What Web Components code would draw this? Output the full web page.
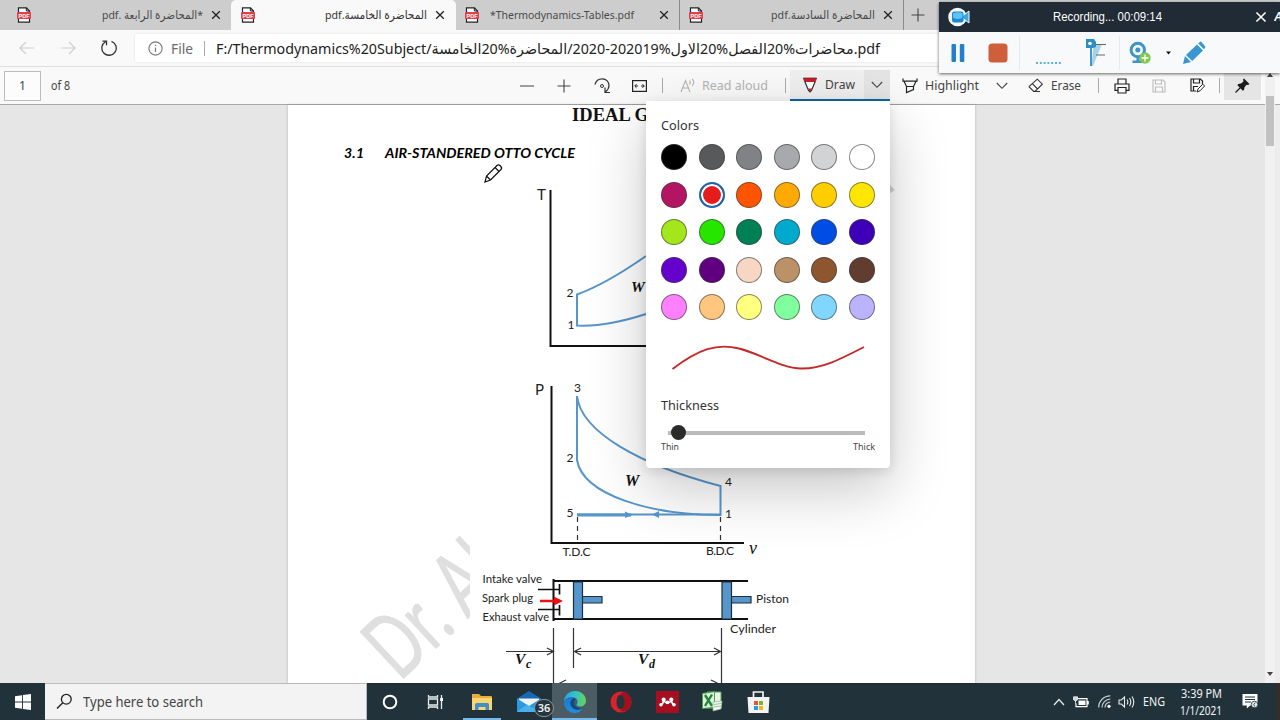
<!DOCTYPE html>
<html lang="en">
<head>
<meta charset="utf-8">
<title>PDF viewer</title>
<style>
	html, body {
		margin: 0;
		height: 100%;
		overflow: hidden;
	}

	body {
		font-family: "Noto Sans", "Open Sans", "DejaVu Sans", sans-serif;
		color: #333;
	}
</style>
</head>
<body>
<app-screen></app-screen>

<script>
const icons = {
	pdf: `<svg width="14" height="16" viewBox="0 0 14 16"><path d="M1.500 .8h8l3 3.200V15.200h-11z" fill="#fff" stroke="#222" stroke-width="1.200"/><path d="M9.300 1v3h3" fill="none" stroke="#222"/><rect x="0" y="5" width="14" height="7" rx="1" fill="#dc4048"/><text x="1.500" y="10.500" font-family="Liberation Sans, sans-serif" font-size="5.500" font-weight="bold" fill="#fff" textLength="11">PDF</text></svg>`,
	close: `<svg width="10" height="10" viewBox="0 0 10 10"><path d="M1.200 1.200l7.600 7.600M8.800 1.200L1.200 8.800" stroke="currentColor" stroke-width="1.300"/></svg>`,
	plus: `<svg width="14" height="14" viewBox="0 0 14 14"><path d="M7 .5v13M.5 7h13" stroke="#444" stroke-width="1.100"/></svg>`,
	minus: `<svg width="14" height="14" viewBox="0 0 14 14"><path d="M0 7h14" stroke="#555" stroke-width="1.100"/></svg>`,
	back: `<svg width="16" height="14" viewBox="0 0 16 14"><path d="M15 7H1M7 1L1 7l6 6" fill="none" stroke="#cfcfcf" stroke-width="1.200"/></svg>`,
	forward: `<svg width="16" height="14" viewBox="0 0 16 14"><path d="M1 7h14M9 1l6 6-6 6" fill="none" stroke="#cfcfcf" stroke-width="1.200"/></svg>`,
	reload: `<svg width="16" height="16" viewBox="0 0 16 16"><path d="M10.500 1.300A7.200 7.200 0 1 1 4.500 1.800M1.500 1.200h4v4" fill="none" stroke="#333" stroke-width="1.300"/></svg>`,
	info: `<svg width="15" height="15" viewBox="0 0 15 15"><circle cx="7.500" cy="7.500" r="6.600" fill="none" stroke="#777" stroke-width="1.100"/><path d="M7.500 6.500v4.500M7.500 3.800v1.300" stroke="#777" stroke-width="1.200"/></svg>`,
	rotate: `<svg width="17" height="16" viewBox="0 0 17 16"><path d="M1 6.500C2 2.500 5 .8 8.300 .8 12.500 .8 15 4 15 7.500 15 10 13.800 12 11.500 14M11 9.500v5h5" fill="none" stroke="#333" stroke-width="1.200"/><circle cx="8" cy="8" r="1.500" fill="none" stroke="#333"/></svg>`,
	fit: `<svg width="15" height="12" viewBox="0 0 15 12"><rect x=".6" y=".6" width="13.800" height="10.800" fill="none" stroke="#222" stroke-width="1.200"/><path d="M3 6h3M12 6H9M4.500 4.200L2.700 6l1.800 1.800M10.500 4.200L12.300 6l-1.800 1.800" fill="none" stroke="#222"/></svg>`,
	aloud: `<svg width="16" height="15" viewBox="0 0 16 15"><path d="M1 14L5.500 2.500 10 14M2.600 10h5.800M9.500 2.500q1.600 1.800 0 4M12.300 1q2.800 3 0 7" fill="none" stroke="#b4b4b4" stroke-width="1.100"/></svg>`,
	draw: `<svg width="14" height="16" viewBox="0 0 14 16"><path d="M.3 1h13.400L12 5.500H2z" fill="#c4202c" stroke="#751a20" stroke-width=".7"/><path d="M2 5l3.500 8.500L7 15l1.500-1.500L12 5" fill="#fff" stroke="#333" stroke-width="1.200"/><path d="M5 11.500L7 15l2-3.500z" fill="#c4202c"/></svg>`,
	chevron: `<svg width="12" height="8" viewBox="0 0 12 8"><path d="M.8 1L6 6.300 11.200 1" fill="none" stroke="#444" stroke-width="1.100"/></svg>`,
	highlight: `<svg width="16" height="16" viewBox="0 0 16 16"><path d="M1 .5v2.700h14V.5M2 3.300L4.500 8.500h7L14 3.300M4.500 8.500V14.500l7-3V8.500" fill="none" stroke="#222" stroke-width="1.200"/></svg>`,
	erase: `<svg width="16" height="15" viewBox="0 0 16 15"><path d="M1.200 8.300L9.300 1.200l5 5-7 7H5.500L1.200 9zM4.300 5.700l5.300 5.300M5 13.500h7" fill="none" stroke="#333" stroke-width="1.100"/></svg>`,
	print: `<svg width="16" height="16" viewBox="0 0 16 16"><path d="M4 6V1h8v5M4 12.300H1V6h14v6.300h-3M4 9.500h8V15H4z" fill="none" stroke="#222" stroke-width="1.200"/></svg>`,
	save: `<svg width="14" height="14" viewBox="0 0 14 14"><path d="M1 1h10l2 2v10H1zM3.500 1v4h6V1M3.500 13V8h7v5" fill="none" stroke="#bbb" stroke-width="1.100"/></svg>`,
	saveAs: `<svg width="15" height="15" viewBox="0 0 15 15"><path d="M6 13H1V1h9.500l2 2v3M3.500 1v4h6V1M3.500 13V8.500H8" fill="none" stroke="#222" stroke-width="1.200"/><path d="M7 14l1-3 4.800-4.800 1.800 1.800L10 12.800z" fill="#fff" stroke="#222"/></svg>`,
	pin: `<svg width="15" height="15" viewBox="0 0 15 15"><path d="M9 .5L14.500 6 13 7 11.500 6.800 9.500 9.300 9 12 7.800 12.800 2.400 7.200 3.200 6 6 5.600 8.500 3.500 8 1.500z" fill="#1c1c1c"/><path d="M5.500 9.500L.5 14.500" stroke="#1c1c1c" stroke-width="1.200"/></svg>`,
	start: `<svg width="16" height="16" viewBox="0 0 16 16"><path d="M0 2.300l7-1v6.300H0zM7.900 1.100L16 0v7.600H7.900zM0 8.400h7v6.300l-7-1zM7.900 8.400H16V16l-8.100-1.100z" fill="#fff"/></svg>`,
	search: `<svg width="17" height="17" viewBox="0 0 17 17"><circle cx="10.300" cy="6.200" r="4.900" fill="none" stroke="#222" stroke-width="1.300"/><path d="M6.800 9.700L1 15.500" stroke="#222" stroke-width="1.400"/></svg>`,
	cortana: `<svg width="16" height="16" viewBox="0 0 16 16"><circle cx="8" cy="8" r="6.300" fill="none" stroke="#fff" stroke-width="2"/></svg>`,
	taskView: `<svg width="17" height="16" viewBox="0 0 17 16"><path d="M1.500 1v2h9V1M1.500 15v-2h9v2M1.500 5h9v6h-9zM14.500 1v14" fill="none" stroke="#e8eef0" stroke-width="1.300"/><path d="M13.200 4h2.800v3h-2.800z" fill="#fff"/></svg>`,
	explorer: `<svg width="22" height="18" viewBox="0 0 22 18"><path d="M1 1h7l2 2h10a1 1 0 0 1 1 1v12H1z" fill="#e9ad3a"/><path d="M1 5h20v12H1z" fill="#fbd66f"/><path d="M4 17v-5.500q0-1.500 1.500-1.500h11q1.500 0 1.500 1.500V17h-3.500v-3h-7v3z" fill="#3f8fc8"/></svg>`,
	edge: `<svg width="24" height="24" viewBox="0 0 24 24"><defs><linearGradient id="e1" x1="0" x2="1"><stop offset="0" stop-color="#2ba5e6"/><stop offset=".55" stop-color="#35c3c9"/><stop offset="1" stop-color="#6bd54c"/></linearGradient><linearGradient id="e2" x1="0" y1="0" x2="0" y2="1"><stop offset="0" stop-color="#1b77c8"/><stop offset="1" stop-color="#1f8fe0"/></linearGradient></defs><path d="M1 12C1 5.500 6 1 12.200 1 18.500 1 23 5.500 23 10.500c0 4-2.800 6-5.800 6-2.300 0-3.700-.8-3.700-1.800 0-.7 1.100-1 1.100-2.900 0-2.400-2.100-4.300-5.200-4.300C5 7.500 1.500 10 1 12z" fill="url(#e1)"/><path d="M1 12c.5-3 3.500-4.700 7-4.700 1.400 0 2.600.3 3.600.8C7.800 9 6.700 12.500 8 15.700c1.500 3.600 6.800 5.500 12 2.400C17.700 22 14.500 23 12 23 5.500 23 1 18 1 12z" fill="url(#e2)"/><path d="M11.600 8.100C7.800 9 6.700 12.500 8 15.700c1.500 3.600 6.800 5.500 12 2.400-3 .7-8-.5-8.800-4.600-.4-2 .5-3 1.500-4.500z" fill="#114a8b"/></svg>`,
	opera: `<svg width="22" height="22" viewBox="0 0 22 22"><circle cx="11" cy="11" r="10.500" fill="#d9222b"/><path d="M17 2.500a10.500 10.500 0 0 1 0 17q-4 2-7 0 4-1 4-8.500T10 2.500q3.500-2 7 0z" fill="#a30f1a"/><ellipse cx="10.500" cy="11" rx="4" ry="7.300" fill="#25343b"/></svg>`,
	mendeley: `<svg width="23" height="22" viewBox="0 0 23 22"><path d="M0 0h23v22H0z" fill="#a70f21"/><path d="M5 13.500q2-.5 2.700-4 1.300 2.500 3.800 2.500t3.800-2.500q.7 3.500 2.700 4" fill="none" stroke="#fff" stroke-width="1.600"/><circle cx="7.700" cy="8.700" r="2.100" fill="#fff"/><circle cx="15.300" cy="8.700" r="2.100" fill="#fff"/><circle cx="11.500" cy="11.300" r="1.900" fill="#fff"/><circle cx="5" cy="13.700" r="1.800" fill="#fff"/><circle cx="18" cy="13.700" r="1.800" fill="#fff"/></svg>`,
	excel: `<svg width="21" height="21" viewBox="0 0 21 21"><path d="M5 1h14v16H5z" fill="#e8f4e5" stroke="#5aa25a"/><path d="M0 2l13-2v17L0 18z" fill="#4da34f"/><path d="M1 3l11-1.800v14.600L1 17z" fill="#dff1da"/><path d="M3 4l7 11M10 3.500L3 15" stroke="#24863a" stroke-width="2.400"/><path d="M11 11l9-1-1 8-8 2z" fill="#f3f8f1" stroke="#85b885" stroke-width=".7"/><path d="M12 13.500l7-1M12 16l7-1" stroke="#85b885" stroke-width=".8"/></svg>`,
	store: `<svg width="23" height="24" viewBox="0 0 23 24"><path d="M6.500 8V2h9.500v6" fill="none" stroke="#f4f4f4" stroke-width="1.700"/><path d="M.5 7h22l-1 16h-20z" fill="#f4f4f4"/><path d="M7 11h4v4H7z" fill="#e6532c"/><path d="M12 11h4v4h-4z" fill="#7db82c"/><path d="M7 16h4v4H7z" fill="#22a0dd"/><path d="M12 16h4v4h-4z" fill="#f8b31b"/></svg>`,
	mail: `<svg width="24" height="22" viewBox="0 0 24 22"><path d="M0 7.500L12 0l12 7.500V21H0z" fill="#1669b4"/><path d="M2 7.500h20v8H2z" fill="#eef3f7"/><path d="M0 7.500L12 15l12-7.500V21H0z" fill="#2a9ae0"/><path d="M0 21l10-7.500 2 1.500 12 6z" fill="#49b1f0"/></svg>`,
	up: `<svg width="12" height="8" viewBox="0 0 12 8"><path d="M1 7l5-5.500L11 7" fill="none" stroke="#e8eef0" stroke-width="1.200"/></svg>`,
	battery: `<svg width="16" height="12" viewBox="0 0 16 12"><path d="M4.500 2.700h9.500v8H3V7.500M15.200 5v3.500" fill="none" stroke="#fff" stroke-width="1.200"/><path d="M5.500 4.500h7v4.500H5.500z" fill="#fff"/><path d="M.5.800h4v3l-2 1.500-2-1.500zM2.500 5v3" fill="#cdd6d9" stroke="#fff" stroke-width=".7"/></svg>`,
	wifi: `<svg width="13" height="13" viewBox="0 0 13 13"><g fill="none" stroke="#c7d0d4" stroke-width="1.200"><path d="M.7 12.500A11.500 11.500 0 0 1 12.300.8M4 12.500A8.500 8.500 0 0 1 12.300 4M7 12.500A5.500 5.500 0 0 1 12.300 7"/></g><circle cx="11" cy="11.300" r="1.600" fill="#fff"/></svg>`,
	sound: `<svg width="17" height="14" viewBox="0 0 17 14"><path d="M1 5h2.300L6.500 2v10L3.300 9H1zM9 4.500q1.700 2.500 0 5M11.500 3q2.700 4 0 8M14 1.500q3.600 5.500 0 11" fill="none" stroke="#e8eef0" stroke-width="1.100"/></svg>`,
	notes: `<svg width="17" height="17" viewBox="0 0 17 17"><path d="M.5 1h15v11.500H8L4.800 15.500v-3H.5z" fill="#fff"/><path d="M3 4h10M3 6.500h10M3 9h6" stroke="#22323a"/><circle cx="12.500" cy="11.500" r="3.300" fill="#dfe6e8" stroke="#22323a" stroke-width=".8"/><path d="M13.500 9.500q-3 1.500-1 4" fill="none" stroke="#22323a" stroke-width=".8"/></svg>`,
	camera: `<svg width="22" height="20" viewBox="0 0 22 20"><circle cx="9.500" cy="10" r="9.300" fill="#f3f8fb"/><path d="M14.500 9l6.500-5v12l-6.500-5z" fill="#3aa7e6" stroke="#f3f8fb"/><rect x="4" y="4.500" width="11.500" height="11" rx="2.500" fill="#1e86d6"/><path d="M5 6.500q5-2.500 9.500 0v4q-5 3-9.500 0z" fill="#5ec3f4"/></svg>`,
	pause: `<svg width="14" height="20" viewBox="0 0 14 20"><rect x=".5" y="1" width="4.500" height="18" rx="1" fill="#2480c8"/><rect x="8.800" y="1" width="4.500" height="18" rx="1" fill="#2480c8"/></svg>`,
	stop: `<svg width="20" height="20" viewBox="0 0 20 20"><rect x=".5" y=".5" width="19" height="19" rx="3.500" fill="#cf5e3a"/></svg>`,
	dots: `<svg width="26" height="24" viewBox="0 0 26 24"><path d="M1 22h25" stroke="#2e9ac0" stroke-width="1.600" stroke-dasharray="2 1.800"/></svg>`,
	marker: `<svg width="21" height="28" viewBox="0 0 21 28"><path d="M8 5h8L7 27H5z" fill="#a8d2ea"/><path d="M0 0h8l2 3v5l-3 1H0z" fill="#2c8dc9"/><circle cx="4" cy="4.500" r="1.800" fill="#fff"/><path d="M5 9v18" stroke="#2c8dc9" stroke-width="1.800"/><path d="M10 5.500h10M10 16h9" stroke="#666" stroke-width="1.100"/></svg>`,
	webcam: `<svg width="22" height="24" viewBox="0 0 22 24"><circle cx="8.800" cy="9" r="6.700" fill="none" stroke="#3c94c8" stroke-width="3"/><circle cx="8.800" cy="9" r="2.500" fill="#3c94c8"/><path d="M7.500 16h3v3.500h3V22h-10v-2.500h4z" fill="#3c94c8"/><circle cx="16" cy="17" r="5.700" fill="#84c84a"/><path d="M12.500 17h7M16 13.500v7" stroke="#fff" stroke-width="1.300"/></svg>`,
	caret: `<svg width="5" height="4" viewBox="0 0 5 4"><path d="M0 .5h5L2.500 3.500z" fill="#111"/></svg>`,
	pencil: `<svg width="23" height="24" viewBox="0 0 23 24"><path d="M0 23l2-8 6 6zM3 14L14 3.500l6 6L9.200 20zM15.200 2.500L17.500.5q1 0 5 5.500L21 8.300z" fill="#3a96cf"/></svg>`
};

// shared base: opens a shadow root and fills it once
class BaseElement extends HTMLElement {
	constructor() {
		super();
		this.shadow = this.attachShadow({ mode: "open" });
	}

	connectedCallback() {
		this.shadow.innerHTML = `<style>:host { display: block; box-sizing: border-box; } * { box-sizing: border-box; }</style>` + this.render();
	}
}

class UiIcon extends BaseElement {
	render() {
		return `
			<style>
				:host { display: block; flex: none; line-height: 0; }
				svg { display: block; }
			</style>
			` + icons[this.getAttribute("name")];
	}
}

// one line of text squeezed or stretched to the width attribute
class FitLabel extends BaseElement {
	connectedCallback() {
		super.connectedCallback();
		const span = this.shadow.querySelector("span");
		const want = Number(this.getAttribute("width"));
		requestAnimationFrame(() => this.fit(span, want));
		this.fit(span, want);
	}

	fit(span, want) {
		if (span.offsetWidth) {
			span.style.transform = "none";
			span.style.transform = "scaleX(" + want / span.getBoundingClientRect().width + ")";
		}
	}

	render() {
		return `
			<style>
				:host { flex: none; width: ${this.getAttribute("width")}px; line-height: 20px; height: 20px; }
				span { display: inline-block; white-space: nowrap; transform-origin: 0 50%; }
			</style>
			<span dir="${this.getAttribute("text-dir") || "ltr"}"><slot></slot></span>
		`;
	}
}

class BrowserTab extends BaseElement {
	render() {
		const rtl = this.getAttribute("text-dir") === "rtl";
		return `
			<style>
				:host {
					display: flex;
					align-items: center;
					flex: none;
					height: 30px;
					padding: 0 10px;
					color: #4a4a4a;
					font-size: 11.5px;
					border-right: 1px solid #8b8b8b;
				}

				:host([first]) { padding-left: 17px; border-color: transparent; }

				:host([active]) {
					background: #f9f9f9;
					color: #333;
					border: none;
					border-radius: 5px 5px 0 0;
				}

				fit-label { margin: 0 ${rtl ? "8px 0 auto" : "auto 0 11px"}; }
				ui-icon:last-child { color: #222; }
			</style>
			<ui-icon name="pdf"></ui-icon>
			<fit-label width="${this.getAttribute("label-width")}" text-dir="${rtl ? "rtl" : "ltr"}"><slot></slot></fit-label>
			<ui-icon name="close"></ui-icon>
		`;
	}
}

class TabStrip extends BaseElement {
	render() {
		return `
			<style>
				:host { display: flex; height: 30px; background: #cdcdcd; align-items: center; }
				.new { margin-left: 7px; }
			</style>
			<browser-tab first text-dir="rtl" label-width="101" style="width:232px;margin-right:-1px">*المحاضرة الرابعة .pdf</browser-tab>
			<browser-tab active text-dir="rtl" label-width="102" style="width:225px;padding-right:11px">المحاضرة الخامسة.pdf</browser-tab>
			<browser-tab label-width="144" style="width:224px;padding-left:9px">*Thermodynamics-Tables.pdf</browser-tab>
			<browser-tab text-dir="rtl" label-width="104" style="width:224px;padding-left:9px">المحاضرة السادسة.pdf</browser-tab>
			<ui-icon class="new" name="plus"></ui-icon>
		`;
	}
}

class AddressBar extends BaseElement {
	render() {
		return `
			<style>
				:host {
					display: flex;
					align-items: center;
					height: 37px;
					padding-left: 19px;
					background: #f9f9f9;
					border-bottom: 1px solid #dedede;
				}

				.nav { display: flex; gap: 25px; width: 116px; align-items: center; }

				.field {
					display: flex;
					align-items: center;
					flex: 1;
					height: 28px;
					padding-left: 13px;
					background: #fff;
					font-size: 14.5px;
					color: #222;
					box-shadow: 0 0 2px #ddd;
				}

				.file { margin-left: 8px; color: #6b6b6b; }
				.line { width: 1px; height: 15px; margin: 0 11px; background: #aaa; }
			</style>
			<div class="nav">
				<ui-icon name="back"></ui-icon>
				<ui-icon name="forward"></ui-icon>
				<ui-icon name="reload"></ui-icon>
			</div>
			<div class="field">
				<ui-icon name="info"></ui-icon>
				<fit-label class="file" width="22">File</fit-label>
				<div class="line"></div>
				<fit-label width="664">F:/Thermodynamics%20Subject/محاضرات%20الفصل%20الاول%202019-2020/المحاضرة%20الخامسة.pdf</fit-label>
			</div>
		`;
	}
}

class PdfToolbar extends BaseElement {
	render() {
		return `
			<style>
				:host {
					display: flex;
					align-items: center;
					height: 38px;
					padding-left: 4px;
					background: #f9f9f9;
					border-bottom: 1px solid #a9a9a9;
					font-size: 12.5px;
					color: #444;
				}

				.page {
					width: 37px;
					height: 30px;
					border: 1px solid #bcbcbc;
					background: #fcfcfc;
					font-size: 12px;
					line-height: 28px;
					text-align: center;
				}

				.of { margin-left: 10px; font-size: 12px; }
				.zoom { display: flex; align-items: center; margin-left: 450px; gap: 23px; }
				.line { width: 1px; height: 15px; background: #aaa; flex: none; }
				.aloud { display: flex; align-items: center; gap: 6px; margin: 0 17px 0 17px; color: #b4b4b4; }

				.draw {
					display: flex;
					align-items: center;
					width: 100px;
					height: 31px;
					margin: 0 12px 0 4px;
					padding-left: 13px;
					gap: 8px;
					background: #efefef;
					border-bottom: 2px solid #0d68a6;
				}

				.draw .more {
					display: flex;
					align-items: center;
					justify-content: center;
					width: 26px;
					height: 29px;
					margin-left: auto;
					background: #e4e4e4;
				}

				.tool { display: flex; align-items: center; gap: 7px; }
				.pin { display: flex; align-items: center; justify-content: center; width: 37px; height: 29px; margin-left: 4px; background: #e5e5e5; }
				.scroll-top { align-self: stretch; width: 10px; margin: 0 5px -1px auto; background: #f1f1f1; }
				.scroll-top::after { content: ""; display: block; width: 0; margin: 6px auto 0; border: 3px solid transparent; border-top: 0; border-bottom: 4px solid #444; }
			</style>
			<div class="page">1</div>
			<fit-label class="of" width="19">of 8</fit-label>
			<div class="zoom">
				<ui-icon name="minus"></ui-icon>
				<ui-icon name="plus"></ui-icon>
				<ui-icon name="rotate"></ui-icon>
				<ui-icon name="fit" style="margin-left:-2px"></ui-icon>
			</div>
			<div class="line" style="margin-left:15px"></div>
			<div class="aloud"><ui-icon name="aloud"></ui-icon><fit-label width="66">Read aloud</fit-label></div>
			<div class="line"></div>
			<div class="draw">
				<ui-icon name="draw"></ui-icon>
				<fit-label width="30">Draw</fit-label>
				<div class="more"><ui-icon name="chevron"></ui-icon></div>
			</div>
			<div class="tool"><ui-icon name="highlight"></ui-icon><fit-label width="54">Highlight</fit-label></div>
			<ui-icon name="chevron" style="margin:0 20px 0 17px"></ui-icon>
			<div class="tool"><ui-icon name="erase"></ui-icon><fit-label width="30">Erase</fit-label></div>
			<div class="line" style="margin:0 15px 0 17px"></div>
			<ui-icon name="print"></ui-icon>
			<ui-icon name="save" style="margin:0 24px 0 22px"></ui-icon>
			<ui-icon name="saveAs"></ui-icon>
			<div class="line" style="margin-left:14px"></div>
			<div class="pin"><ui-icon name="pin"></ui-icon></div>
			<div class="scroll-top"></div>
		`;
	}
}

// the visible part of the lecture page, drawn in window coordinates
class PdfPage extends BaseElement {
	render() {
		return `
			<style>
				:host { width: 687px; height: 578px; margin-left: 288px; background: #fff; box-shadow: 0 0 3px rgba(0, 0, 0, 0.2); }
				svg { display: block; }
				text { font-family: Lato, "Open Sans", sans-serif; fill: #222; }
				.title text { fill: #000; }
				.math { font-family: "Liberation Serif", serif; font-style: italic; font-weight: bold; fill: #111; }
				.axis { fill: none; stroke: #111; stroke-width: 2; }
				.curve { fill: none; stroke: #5796cb; stroke-width: 2; }
				.thin { fill: none; stroke: #333; stroke-width: 1.2; }
			</style>
			<svg width="687" height="578" viewBox="288 105 687 578">
				<clipPath id="left"><path d="M288 105h182v578H288z"/></clipPath>
				<g clip-path="url(#left)">
					<text transform="translate(403 679) rotate(-43) scale(.68 1)" x="-7" y="0" font-size="89" style="fill:#dfdfdf;stroke:#dfdfdf;stroke-width:1">Dr. Al</text>
				</g>
				<path d="M889 184l6 6-6 4z" fill="#d5d5d5"/>

				<text x="572" y="121" textLength="77" font-size="18.500" style="font-family:'Liberation Serif',serif;font-weight:bold;fill:#111">IDEAL G</text>
				<g class="title" font-size="14" font-weight="bold" font-style="italic">
					<text x="344" y="157.500" textLength="20">3.1</text>
					<text x="385" y="157.500" textLength="190" lengthAdjust="spacingAndGlyphs">AIR-STANDERED OTTO CYCLE</text>
				</g>
				<path d="M485 182l1.500-6L497 165.500q1.500-1.500 3.500.5t.5 3.500L490.500 180zM486.500 176l4 4M495 167.500l4 4" fill="#fff" stroke="#111" stroke-width="1.200"/>

				<path class="axis" d="M550.500 190v156H760"/>
				<path class="curve" d="M646 314Q606 327 577 325.500V294.500Q606 284 646 256"/>
				<text x="537" y="200" font-size="15">T</text>
				<text x="566.500" y="296.500" font-size="12">2</text>
				<text x="567.500" y="329" font-size="12">1</text>
				<text class="math" x="631" y="292" font-size="15.500">W</text>

				<path class="axis" d="M551.500 386v157H744"/>
				<path class="curve" d="M577 396C581 432 640 465 720.500 486V515C650 515 583 495 577 460z"/>
				<path class="curve" d="M577 514.500H720"/>
				<path d="M577 515h54" stroke="#5796cb" stroke-width="3"/>
				<path d="M625 511.500l7.500 3.500-7.500 3zM659 511l-7 3.500 7 3.500z" fill="#5796cb"/>
				<path class="thin" stroke-dasharray="5 4" d="M577.500 517v26M720.500 517v26"/>
				<g font-size="12">
					<text x="535" y="395" font-size="15">P</text>
					<text x="574" y="391.500">3</text>
					<text x="566.500" y="462">2</text>
					<text x="566.500" y="516.500">5</text>
					<text x="725" y="486">4</text>
					<text x="725" y="517.500">1</text>
					<text x="562.500" y="556" textLength="28">T.D.C</text>
					<text x="706" y="555" textLength="28">B.D.C</text>
				</g>
				<text class="math" x="625" y="486" font-size="16">W</text>
				<text class="math" x="749" y="554" font-size="18" style="font-weight:normal">v</text>

				<path class="axis" d="M748 581H553.500V619H748M553.500 579v42" stroke-width="1.800"/>
				<path d="M573.500 582h9v37h-9zM582.500 596.500h19.500v6.500h-19.500zM722 582h9.500v37H722zM731.500 596.500H751v6.500h-19.500z" fill="#5796cb" stroke="#1c2f40" stroke-width="1.200"/>
				<path class="axis" d="M538 589.500h22M559.500 584v10.500M538 609.500h22M559.500 605v10.500" style="stroke-width:1.700"/>
				<path d="M540 599.800h14v-3.300l9 4.500-9 4.500v-3.300h-14z" fill="#f01010"/>
				<g font-size="11.500">
					<text x="482.500" y="583" textLength="59.500" lengthAdjust="spacingAndGlyphs">Intake valve</text>
					<text x="482" y="602" textLength="51" lengthAdjust="spacingAndGlyphs">Spark plug</text>
					<text x="482.500" y="621" textLength="66.500" lengthAdjust="spacingAndGlyphs">Exhaust valve</text>
					<text x="756" y="603" textLength="33" lengthAdjust="spacingAndGlyphs">Piston</text>
					<text x="730" y="632.500" textLength="46" lengthAdjust="spacingAndGlyphs">Cylinder</text>
				</g>
				<path class="thin" d="M553.500 628v56M573.500 628v40M721.500 628v56M506 651.500h47M547 648l6.500 3.500-6.500 3.500M575 651.500h146M581 648l-6.500 3.500 6.500 3.500M714 648l6.500 3.500-6.500 3.500M566 680l-8 4M711 680l8 4"/>
				<text class="math" x="515" y="664" font-size="15.500">V</text>
				<text class="math" x="526" y="668" font-size="12">c</text>
				<text class="math" x="638" y="664" font-size="15.500">V</text>
				<text class="math" x="649" y="667.500" font-size="12">d</text>
			</svg>
		`;
	}
}

class PageScroller extends BaseElement {
	render() {
		return `
			<style>
				:host { display: flex; height: 578px; background: #e6e6e6; }
				.view { flex: 1; }
				.bar { width: 10px; background: #f1f1f1; }
				.thumb { position: relative; width: 8px; height: 50px; background: #c1c1c1; margin: -9px auto 0; }
				.arrow { margin: 526px 2px 0; border: 3px solid transparent; border-top: 4px solid #444; }
				.edge { width: 5px; background: #ececec; }
			</style>
			<div class="view"><slot></slot></div>
			<div class="bar"><div class="thumb"></div><div class="arrow"></div></div>
			<div class="edge"></div>
		`;
	}
}

class DrawPanel extends BaseElement {
	render() {
		const colors = [
			"#000000", "#58595b", "#808285", "#a7a9ac", "#d1d3d4", "#ffffff",
			"#b31564", "#e61b1b", "#ff5500", "#ffaa00", "#ffce00", "#ffe600",
			"#a2e61b", "#26e600", "#008055", "#00aacc", "#004de6", "#3d00b8",
			"#6600cc", "#600080", "#f7d7c4", "#bb9167", "#8e562e", "#613d30",
			"#ff80ff", "#ffc680", "#ffff80", "#80ff9e", "#80d6ff", "#bcb3ff"
		];
		let swatches = "";
		for (let i in colors) {
			swatches += `<i class="` + (i == 7 ? "on" : "") + `" style="background-color:` + colors[i] + `"></i>`;
		}
		return `
			<style>
				:host {
					position: absolute;
					left: 646px;
					top: 101px;
					width: 244px;
					height: 367px;
					padding: 13.5px 15px;
					background: #fff;
					border-radius: 0 0 4px 4px;
					box-shadow: 0 22px 58px rgba(0, 0, 0, 0.22), 0 3px 12px rgba(0, 0, 0, 0.12);
					font-size: 13px;
					color: #333;
				}

				.grid { display: grid; grid-template-columns: repeat(6, 26px); gap: 11.5px; margin-top: 9.5px; }
				i { width: 26px; height: 26px; border-radius: 50%; border: 1px solid rgba(60, 60, 60, 0.6); }
				i.on { border: 2px solid #1667b0; box-shadow: inset 0 0 0 2px #fff; }
				.wave { display: block; margin: 22.5px 0 0 10px; }
				.thickness { margin-top: 22px; }
				.slider { display: flex; align-items: center; height: 16px; margin: 10px 10px 0 7px; background: linear-gradient(#bbb, #bbb) 0 50% / 100% 4px no-repeat; }
				.slider b { width: 15px; height: 15px; margin-left: 3px; border-radius: 50%; background: #2b2b2b; }
				.ends { display: flex; justify-content: space-between; margin-top: -4px; font-size: 9px; color: #444; }
			</style>
			<fit-label width="38">Colors</fit-label>
			<div class="grid">`+swatches+`</div>
			<svg class="wave" width="196" height="30" viewBox="0 0 196 30"><path d="M1.500 26C28 6 46 0 68 5.500S110 25 130 25.500 168 17 193 4" fill="none" stroke="#c62828" stroke-width="1.900"/></svg>
			<fit-label class="thickness" width="58">Thickness</fit-label>
			<div class="slider"><b></b></div>
			<div class="ends"><fit-label width="18">Thin</fit-label><fit-label width="22">Thick</fit-label></div>
		`;
	}
}

class RecorderBar extends BaseElement {
	render() {
		return `
			<style>
				:host {
					position: absolute;
					left: 939px;
					top: 2px;
					width: 341px;
					height: 71px;
					background: #f7f9fb;
					box-shadow: 0 1px 3px rgba(0, 0, 0, 0.6);
				}

				.head {
					display: flex;
					align-items: center;
					height: 30px;
					padding-left: 9px;
					background: #202b36;
					color: #fff;
					font-family: "Liberation Sans", sans-serif;
					font-size: 12px;
				}

				.head fit-label { margin: 0 94px 0 83px; }
				.head em { margin-left: 8px; width: 6px; overflow: hidden; font-weight: bold; color: #fff; }
				.body { display: flex; align-items: center; height: 41px; padding-left: 12px; }
				.line { width: 1px; height: 34px; background: #e6eaec; }
			</style>
			<div class="head">
				<ui-icon name="camera"></ui-icon>
				<fit-label width="109">Recording... 00:09:14</fit-label>
				<ui-icon name="close" style="transform:scale(1.2)"></ui-icon>
				<em>A</em>
			</div>
			<div class="body">
				<ui-icon name="pause"></ui-icon>
				<ui-icon name="stop" style="margin:0 11px 0 23px"></ui-icon>
				<div class="line"></div>
				<ui-icon name="dots" style="margin:0 25px 0 15px"></ui-icon>
				<ui-icon name="marker"></ui-icon>
				<div class="line" style="margin:0 9px 0 12px"></div>
				<ui-icon name="webcam"></ui-icon>
				<ui-icon name="caret" style="margin:0 12px 0 15px"></ui-icon>
				<ui-icon name="pencil"></ui-icon>
			</div>
		`;
	}
}

class TaskBar extends BaseElement {
	render() {
		return `
			<style>
				:host { display: flex; height: 37px; background: #22323a; color: #f0f4f5; }
				.cell { display: flex; align-items: center; justify-content: center; width: 46px; height: 37px; position: relative; flex: none; }
				.start { width: 45px; }
				.search { display: flex; align-items: center; gap: 10px; width: 322px; flex: none; padding-left: 11px; background: #f3f3f3; border: 1px solid #bbb; border-left: none; font-size: 14px; color: #444; }
				.open { box-shadow: inset 0 -2px #76b9ed; }
				.active { background: #4b5c64; }

				.badge {
					position: absolute;
					right: -2px;
					bottom: 3px;
					width: 20px;
					height: 18px;
					border: 1px solid #8b989d;
					border-radius: 9px;
					background: #27363e;
					font-size: 11px;
					font-weight: 600;
					line-height: 16px;
					text-align: center;
					z-index: 1;
				}

				.tray { display: flex; align-items: center; margin-left: auto; font-size: 12px; }
				.clock { margin: 0 20px 0 15px; }
				.clock fit-label { height: 17px; line-height: 17px; }
				.edge { flex: none; width: 4px; height: 37px; margin-left: 17px; background: #332e2b; }
			</style>
			<div class="cell start"><ui-icon name="start"></ui-icon></div>
			<div class="search"><ui-icon name="search"></ui-icon><fit-label width="120">Type here to search</fit-label></div>
			<div class="cell"><ui-icon name="cortana"></ui-icon></div>
			<div class="cell" style="width:44px"><ui-icon name="taskView"></ui-icon></div>
			<div class="cell open" style="margin:0 4px 0 6px;width:38px"><ui-icon name="explorer"></ui-icon></div>
			<div class="cell" style="width:47px"><ui-icon name="mail"></ui-icon><div class="badge">36</div></div>
			<div class="cell open active" style="width:45px"><ui-icon name="edge"></ui-icon></div>
			<div class="cell" style="width:47px"><ui-icon name="opera"></ui-icon></div>
			<div class="cell"><ui-icon name="mendeley"></ui-icon></div>
			<div class="cell" style="width:44px"><ui-icon name="excel"></ui-icon></div>
			<div class="cell" style="width:48px"><ui-icon name="store"></ui-icon></div>
			<div class="tray">
				<ui-icon name="up"></ui-icon>
				<ui-icon name="battery" style="margin:0 9px 0 8px"></ui-icon>
				<ui-icon name="wifi"></ui-icon>
				<ui-icon name="sound" style="margin:0 8px 0 7px"></ui-icon>
				<fit-label width="22">ENG</fit-label>
				<div class="clock"><fit-label width="41" style="margin-left:1px">3:39 PM</fit-label><fit-label width="42">1/1/2021</fit-label></div>
				<ui-icon name="notes"></ui-icon>
				<div class="edge"></div>
			</div>
		`;
	}
}

class AppScreen extends BaseElement {
	render() {
		return `
			<style>
				:host { position: relative; width: 1280px; height: 720px; overflow: hidden; }
			</style>
			<tab-strip></tab-strip>
			<address-bar></address-bar>
			<pdf-toolbar></pdf-toolbar>
			<page-scroller><pdf-page></pdf-page></page-scroller>
			<task-bar></task-bar>
			<draw-panel></draw-panel>
			<recorder-bar></recorder-bar>
		`;
	}
}

customElements.define('ui-icon', UiIcon);
customElements.define('fit-label', FitLabel);
customElements.define('browser-tab', BrowserTab);
customElements.define('tab-strip', TabStrip);
customElements.define('address-bar', AddressBar);
customElements.define('pdf-toolbar', PdfToolbar);
customElements.define('pdf-page', PdfPage);
customElements.define('page-scroller', PageScroller);
customElements.define('draw-panel', DrawPanel);
customElements.define('recorder-bar', RecorderBar);
customElements.define('task-bar', TaskBar);
customElements.define('app-screen', AppScreen);
</script>
</body>
</html>
